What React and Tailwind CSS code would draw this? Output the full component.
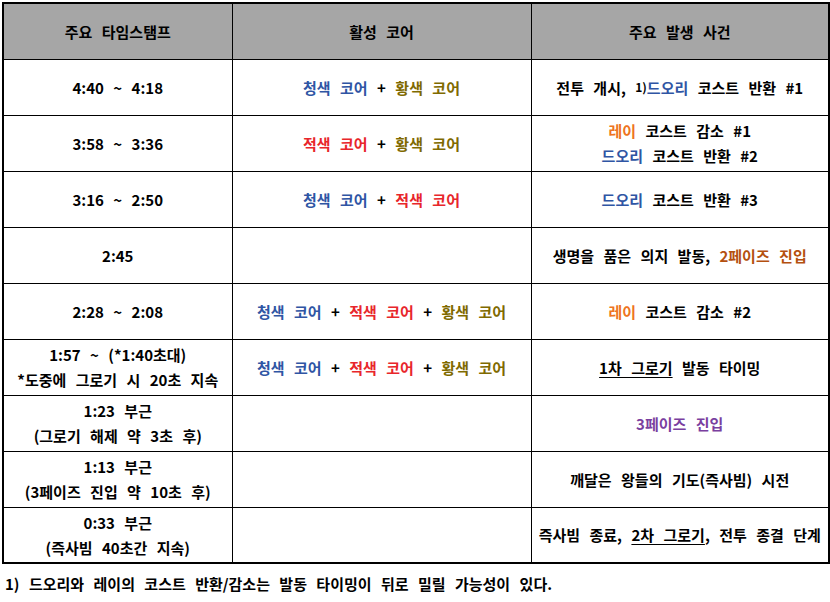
import React from 'react';

const B = ({ children }) => <span className="text-[#2f55a4]">{children}</span>;
const R = ({ children }) => <span className="text-[#e8262b]">{children}</span>;
const Y = ({ children }) => <span className="text-[#7f6a00]">{children}</span>;
const O = ({ children }) => <span className="text-[#ee7421]">{children}</span>;
const Br = ({ children }) => <span className="text-[#b4500f]">{children}</span>;
const P = ({ children }) => <span className="text-[#7a3fa0]">{children}</span>;
const U = ({ children }) => <span className="underline underline-offset-[3px] decoration-1">{children}</span>;

const ROWS = [
  {
    time: '4:40 ~ 4:18',
    core: <><B>청색 코어</B> + <Y>황색 코어</Y></>,
    event: <>전투 개시, <sup className="text-[12px] relative -top-[2px] [word-spacing:0]">1)</sup><B>드오리</B> 코스트 반환 #1</>,
  },
  {
    time: '3:58 ~ 3:36',
    core: <><R>적색 코어</R> + <Y>황색 코어</Y></>,
    event: <><div><O>레이</O> 코스트 감소 #1</div><div><B>드오리</B> 코스트 반환 #2</div></>,
  },
  {
    time: '3:16 ~ 2:50',
    core: <><B>청색 코어</B> + <R>적색 코어</R></>,
    event: <><B>드오리</B> 코스트 반환 #3</>,
  },
  {
    time: '2:45',
    core: null,
    event: <>생명을 품은 의지 발동, <Br>2페이즈 진입</Br></>,
  },
  {
    time: '2:28 ~ 2:08',
    core: <><B>청색 코어</B> + <R>적색 코어</R> + <Y>황색 코어</Y></>,
    event: <><O>레이</O> 코스트 감소 #2</>,
  },
  {
    time: <><div>1:57 ~ (*1:40초대)</div><div>*도중에 그로기 시 20초 지속</div></>,
    core: <><B>청색 코어</B> + <R>적색 코어</R> + <Y>황색 코어</Y></>,
    event: <><U>1차 그로기</U> 발동 타이밍</>,
  },
  {
    time: <><div>1:23 부근</div><div>(그로기 해제 약 3초 후)</div></>,
    core: null,
    event: <P>3페이즈 진입</P>,
  },
  {
    time: <><div>1:13 부근</div><div>(3페이즈 진입 약 10초 후)</div></>,
    core: null,
    event: <>깨달은 왕들의 기도(즉사빔) 시전</>,
  },
  {
    time: <><div>0:33 부근</div><div>(즉사빔 40초간 지속)</div></>,
    core: null,
    event: <>즉사빔 종료, <U>2차 그로기</U>, 전투 종결 단계</>,
  },
];

export default function App() {
  return (
    <div className="w-[830px] h-[602px] bg-white text-black font-['Noto_Sans_CJK_KR','Noto_Sans',sans-serif] font-semibold text-[15px] leading-[25px] [word-spacing:6px] pt-[2px] pl-[2px]">
      <table className="table-fixed border-collapse w-[826px] border-2 border-black">
        <colgroup>
          <col className="w-[229px]" />
          <col className="w-[299px]" />
          <col className="w-[298px]" />
        </colgroup>
        <thead>
          <tr className="h-[56px] bg-[#a6a6a6]">
            <th className="border border-black font-bold text-center">주요 타임스탬프</th>
            <th className="border border-black font-bold text-center">활성 코어</th>
            <th className="border border-black font-bold text-center">주요 발생 사건</th>
          </tr>
        </thead>
        <tbody>
          {ROWS.map((r, i) => (
            <tr key={i} className="h-[56px]">
              <td className="border border-black text-center align-middle p-0">{r.time}</td>
              <td className="border border-black text-center align-middle p-0">{r.core}</td>
              <td className="border border-black text-center align-middle p-0">{r.event}</td>
            </tr>
          ))}
        </tbody>
      </table>
      <p className="mt-[7px] pl-[3px]">1) 드오리와 레이의 코스트 반환/감소는 발동 타이밍이 뒤로 밀릴 가능성이 있다.</p>
    </div>
  );
}
